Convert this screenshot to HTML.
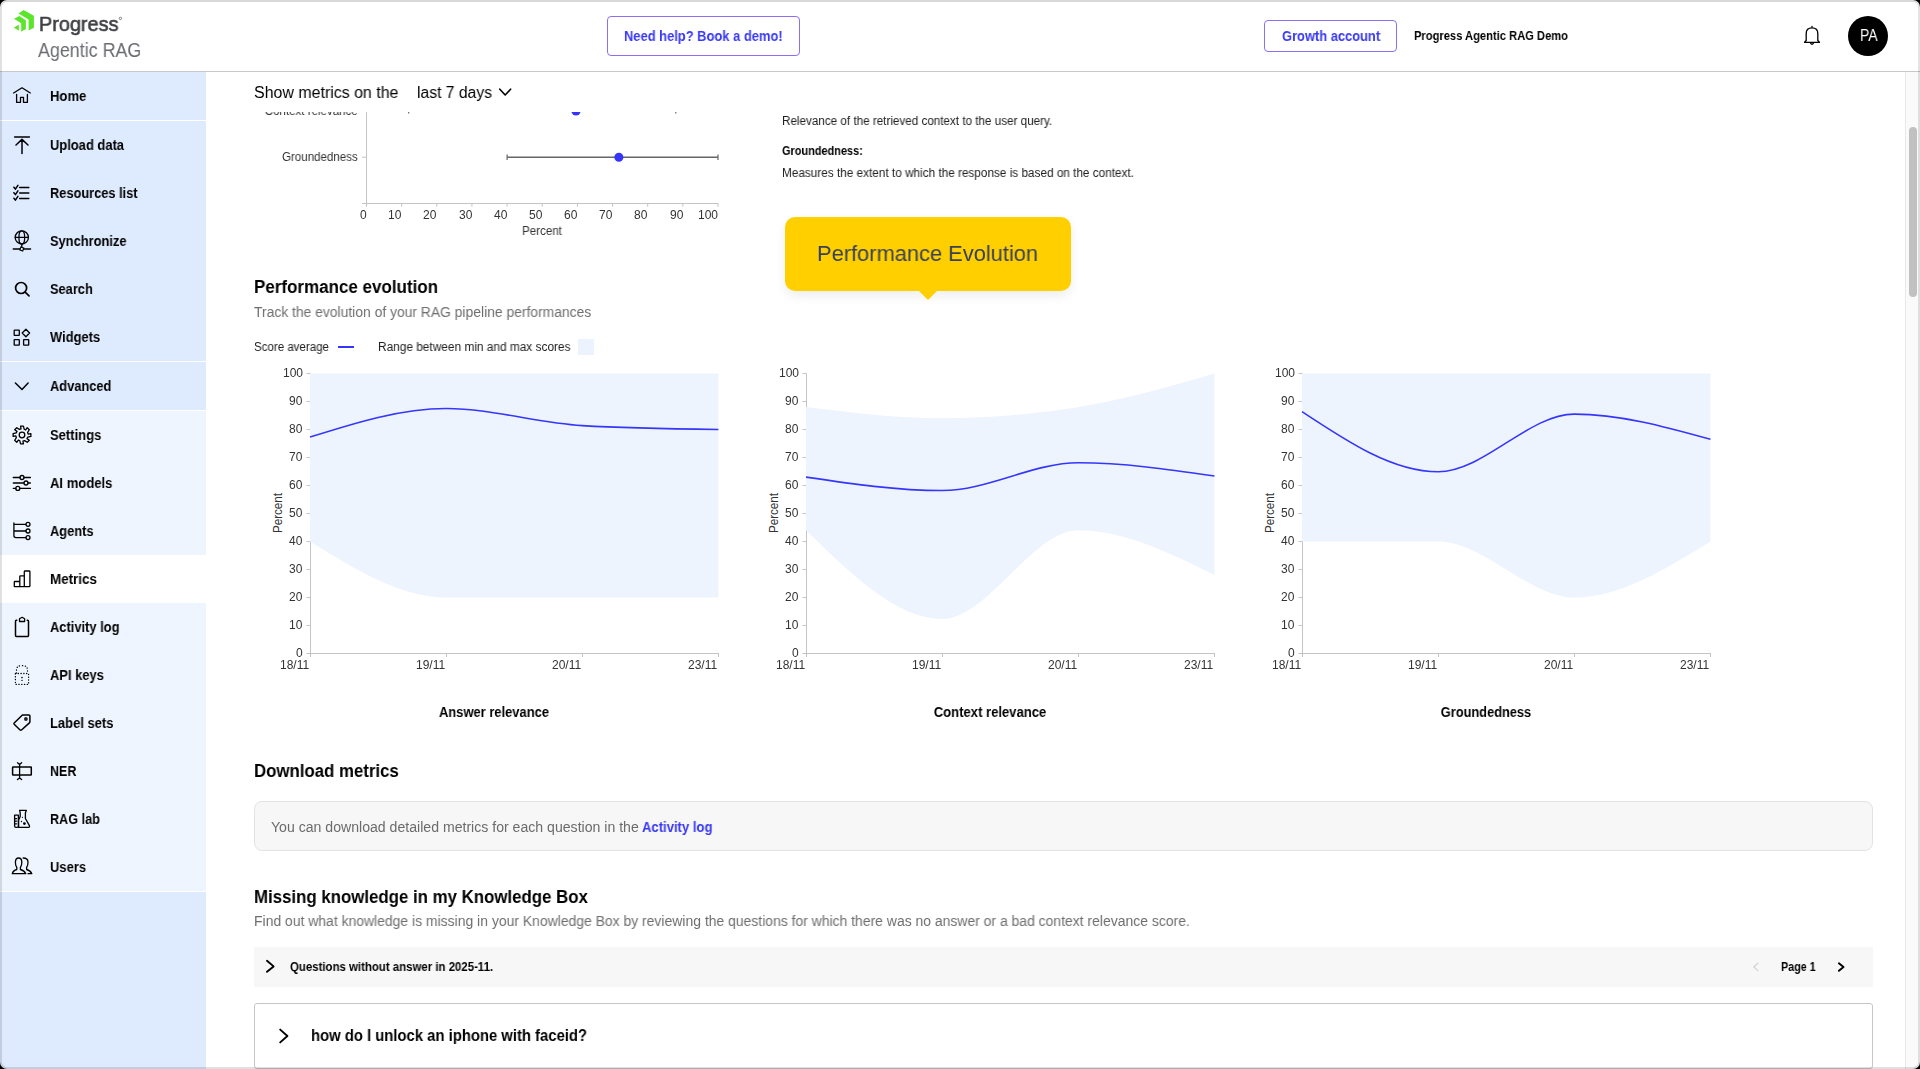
<!DOCTYPE html>
<html><head><meta charset="utf-8"><style>
*{margin:0;padding:0;box-sizing:border-box}
html,body{width:1920px;height:1069px;overflow:hidden;background:#fff;font-family:"Liberation Sans", sans-serif}
.t{position:absolute;white-space:nowrap;line-height:1;font-family:"Liberation Sans", sans-serif;will-change:transform}
.nav{position:absolute;left:0;width:206px;height:48px}
svg{position:absolute;left:0;top:0;overflow:visible}
</style></head><body>
<!-- sidebar bg -->
<div style="position:absolute;left:0;top:72px;width:206px;height:997px;background:#deeafd"></div>
<div style="position:absolute;left:0;top:120px;width:206px;height:1px;background:#fff"></div>
<div style="position:absolute;left:0;top:361px;width:206px;height:1px;background:#fff"></div>
<div style="position:absolute;left:0;top:410px;width:206px;height:1px;background:#fff"></div>
<div style="position:absolute;left:0;top:891px;width:206px;height:1px;background:#fff"></div>
<div class="nav" style="top:72px;background:#deeafd"></div><div class="nav" style="top:121px;background:#deeafd"></div><div class="nav" style="top:169px;background:#deeafd"></div><div class="nav" style="top:217px;background:#deeafd"></div><div class="nav" style="top:265px;background:#deeafd"></div><div class="nav" style="top:313px;background:#deeafd"></div><div class="nav" style="top:362px;background:#deeafd"></div><div class="nav" style="top:411px;background:#eef5fe"></div><div class="nav" style="top:459px;background:#eef5fe"></div><div class="nav" style="top:507px;background:#eef5fe"></div><div class="nav" style="top:555px;background:#ffffff"></div><div class="nav" style="top:603px;background:#eef5fe"></div><div class="nav" style="top:651px;background:#eef5fe"></div><div class="nav" style="top:699px;background:#eef5fe"></div><div class="nav" style="top:747px;background:#eef5fe"></div><div class="nav" style="top:795px;background:#eef5fe"></div><div class="nav" style="top:843px;background:#eef5fe"></div>
<!-- header -->
<div style="position:absolute;left:0;top:0;width:1920px;height:71px;background:#fff"></div>
<div style="position:absolute;left:0;top:71px;width:1920px;height:1px;background:#c8c8c8"></div>
<div style="position:absolute;left:607px;top:16px;width:193px;height:40px;border:1px solid #8d6ff6;border-radius:4px"></div>
<div style="position:absolute;left:1264px;top:20px;width:133px;height:32px;border:1px solid #8d6ff6;border-radius:4px"></div>
<div style="position:absolute;left:1848px;top:16px;width:40px;height:40px;border-radius:50%;background:#000"></div>
<!-- main boxes -->
<div style="position:absolute;left:254px;top:801px;width:1619px;height:50px;background:#f7f7f7;border:1px solid #e3e3e3;border-radius:8px"></div>
<div style="position:absolute;left:254px;top:947px;width:1619px;height:40px;background:#f7f7f7"></div>
<div style="position:absolute;left:254px;top:1003px;width:1619px;height:66px;background:#fff;border:1px solid #c6c6c6;border-radius:3px"></div>
<!-- tooltip -->
<div style="position:absolute;left:785px;top:217px;width:286px;height:74px;background:#ffcf00;border-radius:10px;box-shadow:0 5px 12px rgba(0,0,0,0.07)"></div>
<div style="position:absolute;left:917.5px;top:290px;width:0;height:0;border-left:10px solid transparent;border-right:10px solid transparent;border-top:10.7px solid #ffcf00"></div>
<!-- legend -->
<div style="position:absolute;left:338px;top:346px;width:16px;height:2px;background:#3535fb"></div>
<div style="position:absolute;left:578px;top:339px;width:16px;height:16px;background:#edf3fe"></div>
<svg width="1920" height="1069" viewBox="0 0 1920 1069">
<line x1="366.5" y1="105" x2="366.5" y2="204" stroke="#c4c4c4" stroke-width="1"/><line x1="362" y1="203.5" x2="718.5" y2="203.5" stroke="#c4c4c4" stroke-width="1"/><line x1="366.50" y1="203.5" x2="366.50" y2="206.7" stroke="#c4c4c4" stroke-width="1"/><line x1="401.65" y1="203.5" x2="401.65" y2="206.7" stroke="#c4c4c4" stroke-width="1"/><line x1="436.80" y1="203.5" x2="436.80" y2="206.7" stroke="#c4c4c4" stroke-width="1"/><line x1="471.95" y1="203.5" x2="471.95" y2="206.7" stroke="#c4c4c4" stroke-width="1"/><line x1="507.10" y1="203.5" x2="507.10" y2="206.7" stroke="#c4c4c4" stroke-width="1"/><line x1="542.25" y1="203.5" x2="542.25" y2="206.7" stroke="#c4c4c4" stroke-width="1"/><line x1="577.40" y1="203.5" x2="577.40" y2="206.7" stroke="#c4c4c4" stroke-width="1"/><line x1="612.55" y1="203.5" x2="612.55" y2="206.7" stroke="#c4c4c4" stroke-width="1"/><line x1="647.70" y1="203.5" x2="647.70" y2="206.7" stroke="#c4c4c4" stroke-width="1"/><line x1="682.85" y1="203.5" x2="682.85" y2="206.7" stroke="#c4c4c4" stroke-width="1"/><line x1="718.00" y1="203.5" x2="718.00" y2="206.7" stroke="#c4c4c4" stroke-width="1"/><line x1="362" y1="157.2" x2="366.5" y2="157.2" stroke="#c4c4c4" stroke-width="1"/><line x1="362" y1="111" x2="366.5" y2="111" stroke="#c4c4c4" stroke-width="1"/><line x1="507.10" y1="157.2" x2="718.00" y2="157.2" stroke="#666" stroke-width="1.6"/><line x1="507.10" y1="154.5" x2="507.10" y2="160" stroke="#666" stroke-width="1.2"/><line x1="718.00" y1="154.5" x2="718.00" y2="160" stroke="#666" stroke-width="1.2"/><circle cx="618.88" cy="157.2" r="4.5" fill="#3535fb"/><line x1="408.68" y1="111" x2="675.82" y2="111" stroke="#666" stroke-width="1.6"/><line x1="408.68" y1="108.5" x2="408.68" y2="113.5" stroke="#666" stroke-width="1.2"/><line x1="675.82" y1="108.5" x2="675.82" y2="113.5" stroke="#666" stroke-width="1.2"/><circle cx="575.99" cy="111" r="4.6" fill="#3535fb"/>
<line x1="310.50" y1="373.50" x2="310.50" y2="654.00" stroke="#c4c4c4" stroke-width="1"/><line x1="310.00" y1="653.50" x2="719.00" y2="653.50" stroke="#c4c4c4" stroke-width="1"/><line x1="306.50" y1="653.50" x2="310.50" y2="653.50" stroke="#c4c4c4" stroke-width="1"/><line x1="306.50" y1="625.50" x2="310.50" y2="625.50" stroke="#c4c4c4" stroke-width="1"/><line x1="306.50" y1="597.50" x2="310.50" y2="597.50" stroke="#c4c4c4" stroke-width="1"/><line x1="306.50" y1="569.50" x2="310.50" y2="569.50" stroke="#c4c4c4" stroke-width="1"/><line x1="306.50" y1="541.50" x2="310.50" y2="541.50" stroke="#c4c4c4" stroke-width="1"/><line x1="306.50" y1="513.50" x2="310.50" y2="513.50" stroke="#c4c4c4" stroke-width="1"/><line x1="306.50" y1="485.50" x2="310.50" y2="485.50" stroke="#c4c4c4" stroke-width="1"/><line x1="306.50" y1="457.50" x2="310.50" y2="457.50" stroke="#c4c4c4" stroke-width="1"/><line x1="306.50" y1="429.50" x2="310.50" y2="429.50" stroke="#c4c4c4" stroke-width="1"/><line x1="306.50" y1="401.50" x2="310.50" y2="401.50" stroke="#c4c4c4" stroke-width="1"/><line x1="306.50" y1="373.50" x2="310.50" y2="373.50" stroke="#c4c4c4" stroke-width="1"/><line x1="310.50" y1="653.50" x2="310.50" y2="657.00" stroke="#c4c4c4" stroke-width="1"/><line x1="446.50" y1="653.50" x2="446.50" y2="657.00" stroke="#c4c4c4" stroke-width="1"/><line x1="582.50" y1="653.50" x2="582.50" y2="657.00" stroke="#c4c4c4" stroke-width="1"/><line x1="718.50" y1="653.50" x2="718.50" y2="657.00" stroke="#c4c4c4" stroke-width="1"/><path d="M310.00,373.50C355.38,373.50,400.77,373.50,446.15,373.50C491.53,373.50,536.92,373.50,582.30,373.50C627.68,373.50,673.07,373.50,718.45,373.50L718.45,597.50C673.07,597.50,627.68,597.50,582.30,597.50C536.92,597.50,491.53,597.50,446.15,597.50C400.77,597.50,355.38,569.50,310.00,541.50Z" fill="#eef4fe"/><path d="M310.00,437.06C355.38,422.78,400.77,408.50,446.15,408.50C491.53,408.50,536.92,422.97,582.30,425.58C627.68,428.19,673.07,428.85,718.45,429.50" fill="none" stroke="#3535fb" stroke-width="1.6"/><text x="278.20" y="517.00" transform="rotate(-90 278.20 513.00)" text-anchor="middle" font-size="12" fill="#333" font-family="Liberation Sans, sans-serif" textLength="40" lengthAdjust="spacingAndGlyphs">Percent</text><line x1="806.50" y1="373.50" x2="806.50" y2="654.00" stroke="#c4c4c4" stroke-width="1"/><line x1="806.00" y1="653.50" x2="1215.00" y2="653.50" stroke="#c4c4c4" stroke-width="1"/><line x1="802.50" y1="653.50" x2="806.50" y2="653.50" stroke="#c4c4c4" stroke-width="1"/><line x1="802.50" y1="625.50" x2="806.50" y2="625.50" stroke="#c4c4c4" stroke-width="1"/><line x1="802.50" y1="597.50" x2="806.50" y2="597.50" stroke="#c4c4c4" stroke-width="1"/><line x1="802.50" y1="569.50" x2="806.50" y2="569.50" stroke="#c4c4c4" stroke-width="1"/><line x1="802.50" y1="541.50" x2="806.50" y2="541.50" stroke="#c4c4c4" stroke-width="1"/><line x1="802.50" y1="513.50" x2="806.50" y2="513.50" stroke="#c4c4c4" stroke-width="1"/><line x1="802.50" y1="485.50" x2="806.50" y2="485.50" stroke="#c4c4c4" stroke-width="1"/><line x1="802.50" y1="457.50" x2="806.50" y2="457.50" stroke="#c4c4c4" stroke-width="1"/><line x1="802.50" y1="429.50" x2="806.50" y2="429.50" stroke="#c4c4c4" stroke-width="1"/><line x1="802.50" y1="401.50" x2="806.50" y2="401.50" stroke="#c4c4c4" stroke-width="1"/><line x1="802.50" y1="373.50" x2="806.50" y2="373.50" stroke="#c4c4c4" stroke-width="1"/><line x1="806.50" y1="653.50" x2="806.50" y2="657.00" stroke="#c4c4c4" stroke-width="1"/><line x1="942.50" y1="653.50" x2="942.50" y2="657.00" stroke="#c4c4c4" stroke-width="1"/><line x1="1078.50" y1="653.50" x2="1078.50" y2="657.00" stroke="#c4c4c4" stroke-width="1"/><line x1="1214.50" y1="653.50" x2="1214.50" y2="657.00" stroke="#c4c4c4" stroke-width="1"/><path d="M806.00,407.10C851.38,412.70,896.77,418.30,942.15,418.30C987.53,418.30,1032.92,414.57,1078.30,407.10C1123.68,399.63,1169.07,386.57,1214.45,373.50L1214.45,575.10C1169.07,552.70,1123.68,530.30,1078.30,530.30C1032.92,530.30,987.53,619.06,942.15,619.06C896.77,619.06,851.38,574.68,806.00,530.30Z" fill="#eef4fe"/><path d="M806.00,477.10C851.38,483.82,896.77,490.54,942.15,490.54C987.53,490.54,1032.92,462.82,1078.30,462.82C1123.68,462.82,1169.07,469.40,1214.45,475.98" fill="none" stroke="#3535fb" stroke-width="1.6"/><text x="774.20" y="517.00" transform="rotate(-90 774.20 513.00)" text-anchor="middle" font-size="12" fill="#333" font-family="Liberation Sans, sans-serif" textLength="40" lengthAdjust="spacingAndGlyphs">Percent</text><line x1="1302.50" y1="373.50" x2="1302.50" y2="654.00" stroke="#c4c4c4" stroke-width="1"/><line x1="1302.00" y1="653.50" x2="1711.00" y2="653.50" stroke="#c4c4c4" stroke-width="1"/><line x1="1298.50" y1="653.50" x2="1302.50" y2="653.50" stroke="#c4c4c4" stroke-width="1"/><line x1="1298.50" y1="625.50" x2="1302.50" y2="625.50" stroke="#c4c4c4" stroke-width="1"/><line x1="1298.50" y1="597.50" x2="1302.50" y2="597.50" stroke="#c4c4c4" stroke-width="1"/><line x1="1298.50" y1="569.50" x2="1302.50" y2="569.50" stroke="#c4c4c4" stroke-width="1"/><line x1="1298.50" y1="541.50" x2="1302.50" y2="541.50" stroke="#c4c4c4" stroke-width="1"/><line x1="1298.50" y1="513.50" x2="1302.50" y2="513.50" stroke="#c4c4c4" stroke-width="1"/><line x1="1298.50" y1="485.50" x2="1302.50" y2="485.50" stroke="#c4c4c4" stroke-width="1"/><line x1="1298.50" y1="457.50" x2="1302.50" y2="457.50" stroke="#c4c4c4" stroke-width="1"/><line x1="1298.50" y1="429.50" x2="1302.50" y2="429.50" stroke="#c4c4c4" stroke-width="1"/><line x1="1298.50" y1="401.50" x2="1302.50" y2="401.50" stroke="#c4c4c4" stroke-width="1"/><line x1="1298.50" y1="373.50" x2="1302.50" y2="373.50" stroke="#c4c4c4" stroke-width="1"/><line x1="1302.50" y1="653.50" x2="1302.50" y2="657.00" stroke="#c4c4c4" stroke-width="1"/><line x1="1438.50" y1="653.50" x2="1438.50" y2="657.00" stroke="#c4c4c4" stroke-width="1"/><line x1="1574.50" y1="653.50" x2="1574.50" y2="657.00" stroke="#c4c4c4" stroke-width="1"/><line x1="1710.50" y1="653.50" x2="1710.50" y2="657.00" stroke="#c4c4c4" stroke-width="1"/><path d="M1302.00,373.50C1347.38,373.50,1392.77,373.50,1438.15,373.50C1483.53,373.50,1528.92,373.50,1574.30,373.50C1619.68,373.50,1665.07,373.50,1710.45,373.50L1710.45,541.50C1665.07,569.50,1619.68,597.50,1574.30,597.50C1528.92,597.50,1483.53,541.50,1438.15,541.50C1392.77,541.50,1347.38,541.50,1302.00,541.50Z" fill="#eef4fe"/><path d="M1302.00,411.58C1347.38,441.68,1392.77,471.78,1438.15,471.78C1483.53,471.78,1528.92,414.10,1574.30,414.10C1619.68,414.10,1665.07,426.70,1710.45,439.30" fill="none" stroke="#3535fb" stroke-width="1.6"/><text x="1270.20" y="517.00" transform="rotate(-90 1270.20 513.00)" text-anchor="middle" font-size="12" fill="#333" font-family="Liberation Sans, sans-serif" textLength="40" lengthAdjust="spacingAndGlyphs">Percent</text>
</svg>
<!-- sticky header cover -->
<div style="position:absolute;left:206px;top:72px;width:1699px;height:40px;background:#fff;z-index:2"></div>
<!-- scrollbar -->
<div style="position:absolute;left:1905px;top:72px;width:15px;height:997px;background:#fafafa;border-left:1px solid #e8e8e8"></div>
<div style="position:absolute;left:1909px;top:127px;width:8px;height:170px;background:#c1c1c1;border-radius:4px"></div>
<div class="t" id="logo1" style="top:13.12px;font-size:21px;font-weight:400;color:#3e3f44;left:39.20px;transform:scaleX(0.9461);transform-origin:0 0;-webkit-text-stroke:0.6px #3e3f44;">Progress</div><div class="t" id="logo2" style="top:39.02px;font-size:21px;font-weight:400;color:#6b6c70;left:38.00px;transform:scaleX(0.8510);transform-origin:0 0;">Agentic RAG</div><div class="t" id="demo" style="top:29.35px;font-size:14px;font-weight:700;color:#3838f5;left:623.70px;transform:scaleX(0.9226);transform-origin:0 0;">Need help? Book a demo!</div><div class="t" id="growth" style="top:29.05px;font-size:14px;font-weight:700;color:#3838f5;left:1281.90px;transform:scaleX(0.9206);transform-origin:0 0;">Growth account</div><div class="t" id="kbname" style="top:28.54px;font-size:13.3px;font-weight:700;color:#000;left:1413.50px;transform:scaleX(0.8392);transform-origin:0 0;">Progress Agentic RAG Demo</div><div class="t" id="pa" style="top:26.61px;font-size:17px;font-weight:400;color:#fff;left:1859.60px;transform:scaleX(0.8263);transform-origin:0 0;">PA</div><div class="t" id="nav0" style="top:89.15px;font-size:14px;font-weight:700;color:#000;left:49.60px;transform:scaleX(0.9356);transform-origin:0 0;">Home</div><div class="t" id="nav1" style="top:138.15px;font-size:14px;font-weight:700;color:#000;left:49.60px;transform:scaleX(0.9236);transform-origin:0 0;">Upload data</div><div class="t" id="nav2" style="top:186.15px;font-size:14px;font-weight:700;color:#000;left:49.60px;transform:scaleX(0.9152);transform-origin:0 0;">Resources list</div><div class="t" id="nav3" style="top:234.15px;font-size:14px;font-weight:700;color:#000;left:49.60px;transform:scaleX(0.9189);transform-origin:0 0;">Synchronize</div><div class="t" id="nav4" style="top:282.15px;font-size:14px;font-weight:700;color:#000;left:49.60px;transform:scaleX(0.9164);transform-origin:0 0;">Search</div><div class="t" id="nav5" style="top:330.15px;font-size:14px;font-weight:700;color:#000;left:49.60px;transform:scaleX(0.9240);transform-origin:0 0;">Widgets</div><div class="t" id="nav6" style="top:379.15px;font-size:14px;font-weight:700;color:#000;left:49.60px;transform:scaleX(0.9174);transform-origin:0 0;">Advanced</div><div class="t" id="nav7" style="top:428.15px;font-size:14px;font-weight:700;color:#000;left:49.60px;transform:scaleX(0.9287);transform-origin:0 0;">Settings</div><div class="t" id="nav8" style="top:476.15px;font-size:14px;font-weight:700;color:#000;left:49.60px;transform:scaleX(0.9326);transform-origin:0 0;">AI models</div><div class="t" id="nav9" style="top:524.15px;font-size:14px;font-weight:700;color:#000;left:49.60px;transform:scaleX(0.9167);transform-origin:0 0;">Agents</div><div class="t" id="nav10" style="top:572.15px;font-size:14px;font-weight:700;color:#000;left:49.60px;transform:scaleX(0.9566);transform-origin:0 0;">Metrics</div><div class="t" id="nav11" style="top:620.15px;font-size:14px;font-weight:700;color:#000;left:49.60px;transform:scaleX(0.9210);transform-origin:0 0;">Activity log</div><div class="t" id="nav12" style="top:668.15px;font-size:14px;font-weight:700;color:#000;left:49.60px;transform:scaleX(0.9233);transform-origin:0 0;">API keys</div><div class="t" id="nav13" style="top:716.15px;font-size:14px;font-weight:700;color:#000;left:49.60px;transform:scaleX(0.9258);transform-origin:0 0;">Label sets</div><div class="t" id="nav14" style="top:764.15px;font-size:14px;font-weight:700;color:#000;left:49.60px;transform:scaleX(0.8930);transform-origin:0 0;">NER</div><div class="t" id="nav15" style="top:812.15px;font-size:14px;font-weight:700;color:#000;left:49.60px;transform:scaleX(0.9017);transform-origin:0 0;">RAG lab</div><div class="t" id="nav16" style="top:860.15px;font-size:14px;font-weight:700;color:#000;left:49.60px;transform:scaleX(0.9249);transform-origin:0 0;">Users</div><div class="t" id="show" style="top:84.96px;font-size:16px;font-weight:400;color:#000;left:254.40px;transform:scaleX(0.9962);transform-origin:0 0;z-index:3;">Show metrics on the</div><div class="t" id="last7" style="top:84.96px;font-size:16px;font-weight:400;color:#000;left:417.00px;transform:scaleX(0.9806);transform-origin:0 0;z-index:3;">last 7 days</div><div class="t" id="dc_g" style="top:150.84px;font-size:12px;font-weight:400;color:#333;right:1561.80px;transform:scaleX(0.9615);transform-origin:100% 0;">Groundedness</div><div class="t" id="dc_c" style="top:104.84px;font-size:12px;font-weight:400;color:#333;right:1561.80px;transform:scaleX(0.9614);transform-origin:100% 0;">Context relevance</div><div class="t" id="dcx0" style="top:209.34px;font-size:12px;font-weight:400;color:#333;right:1553.50px;">0</div><div class="t" id="dcx1" style="top:209.34px;font-size:12px;font-weight:400;color:#333;right:1518.35px;">10</div><div class="t" id="dcx2" style="top:209.34px;font-size:12px;font-weight:400;color:#333;right:1483.20px;">20</div><div class="t" id="dcx3" style="top:209.34px;font-size:12px;font-weight:400;color:#333;right:1448.05px;">30</div><div class="t" id="dcx4" style="top:209.34px;font-size:12px;font-weight:400;color:#333;right:1412.90px;">40</div><div class="t" id="dcx5" style="top:209.34px;font-size:12px;font-weight:400;color:#333;right:1377.75px;">50</div><div class="t" id="dcx6" style="top:209.34px;font-size:12px;font-weight:400;color:#333;right:1342.60px;">60</div><div class="t" id="dcx7" style="top:209.34px;font-size:12px;font-weight:400;color:#333;right:1307.45px;">70</div><div class="t" id="dcx8" style="top:209.34px;font-size:12px;font-weight:400;color:#333;right:1272.30px;">80</div><div class="t" id="dcx9" style="top:209.34px;font-size:12px;font-weight:400;color:#333;right:1237.15px;">90</div><div class="t" id="dcx10" style="top:209.34px;font-size:12px;font-weight:400;color:#333;right:1202.00px;">100</div><div class="t" style="top:225.04px;font-size:12px;font-weight:400;color:#333;left:-458.10px;width:2000px;text-align:center;transform:scaleX(0.9623);transform-origin:50% 0;"><span id="dc_pct">Percent</span></div><div class="t" id="r1" style="top:115.24px;font-size:12px;font-weight:400;color:#222;left:782.20px;transform:scaleX(0.9722);transform-origin:0 0;">Relevance of the retrieved context to the user query.</div><div class="t" id="r2" style="top:145.24px;font-size:12px;font-weight:700;color:#000;left:782.20px;transform:scaleX(0.9110);transform-origin:0 0;">Groundedness:</div><div class="t" id="r3" style="top:166.94px;font-size:12px;font-weight:400;color:#222;left:782.20px;transform:scaleX(0.9808);transform-origin:0 0;">Measures the extent to which the response is based on the context.</div><div class="t" id="tip" style="top:242.68px;font-size:22px;font-weight:400;color:#384157;left:816.80px;transform:scaleX(0.9934);transform-origin:0 0;">Performance Evolution</div><div class="t" id="pe_h" style="top:277.66px;font-size:18px;font-weight:700;color:#000;left:254.30px;transform:scaleX(0.9439);transform-origin:0 0;">Performance evolution</div><div class="t" id="pe_s" style="top:304.55px;font-size:14px;font-weight:400;color:#6e6e6e;left:254.30px;transform:scaleX(0.9911);transform-origin:0 0;">Track the evolution of your RAG pipeline performances</div><div class="t" id="lg1" style="top:341.34px;font-size:12px;font-weight:400;color:#222;left:254.00px;transform:scaleX(0.9610);transform-origin:0 0;">Score average</div><div class="t" id="lg2" style="top:341.34px;font-size:12px;font-weight:400;color:#222;left:377.50px;transform:scaleX(0.9882);transform-origin:0 0;">Range between min and max scores</div><div class="t" id="c0y0" style="top:647.14px;font-size:12px;font-weight:400;color:#333;right:1617.30px;">0</div><div class="t" id="c0y1" style="top:619.14px;font-size:12px;font-weight:400;color:#333;right:1617.30px;">10</div><div class="t" id="c0y2" style="top:591.14px;font-size:12px;font-weight:400;color:#333;right:1617.30px;">20</div><div class="t" id="c0y3" style="top:563.14px;font-size:12px;font-weight:400;color:#333;right:1617.30px;">30</div><div class="t" id="c0y4" style="top:535.14px;font-size:12px;font-weight:400;color:#333;right:1617.30px;">40</div><div class="t" id="c0y5" style="top:507.14px;font-size:12px;font-weight:400;color:#333;right:1617.30px;">50</div><div class="t" id="c0y6" style="top:479.14px;font-size:12px;font-weight:400;color:#333;right:1617.30px;">60</div><div class="t" id="c0y7" style="top:451.14px;font-size:12px;font-weight:400;color:#333;right:1617.30px;">70</div><div class="t" id="c0y8" style="top:423.14px;font-size:12px;font-weight:400;color:#333;right:1617.30px;">80</div><div class="t" id="c0y9" style="top:395.14px;font-size:12px;font-weight:400;color:#333;right:1617.30px;">90</div><div class="t" id="c0y10" style="top:367.14px;font-size:12px;font-weight:400;color:#333;right:1617.30px;">100</div><div class="t" id="c0x0" style="top:658.84px;font-size:12px;font-weight:400;color:#333;right:1611.30px;">18/11</div><div class="t" id="c0x1" style="top:658.84px;font-size:12px;font-weight:400;color:#333;right:1475.30px;">19/11</div><div class="t" id="c0x2" style="top:658.84px;font-size:12px;font-weight:400;color:#333;right:1339.30px;">20/11</div><div class="t" id="c0x3" style="top:658.84px;font-size:12px;font-weight:400;color:#333;right:1203.30px;">23/11</div><div class="t" style="top:704.65px;font-size:14px;font-weight:700;color:#000;left:-506.10px;width:2000px;text-align:center;transform:scaleX(0.9238);transform-origin:50% 0;"><span id="c0t">Answer relevance</span></div><div class="t" id="c1y0" style="top:647.14px;font-size:12px;font-weight:400;color:#333;right:1121.30px;">0</div><div class="t" id="c1y1" style="top:619.14px;font-size:12px;font-weight:400;color:#333;right:1121.30px;">10</div><div class="t" id="c1y2" style="top:591.14px;font-size:12px;font-weight:400;color:#333;right:1121.30px;">20</div><div class="t" id="c1y3" style="top:563.14px;font-size:12px;font-weight:400;color:#333;right:1121.30px;">30</div><div class="t" id="c1y4" style="top:535.14px;font-size:12px;font-weight:400;color:#333;right:1121.30px;">40</div><div class="t" id="c1y5" style="top:507.14px;font-size:12px;font-weight:400;color:#333;right:1121.30px;">50</div><div class="t" id="c1y6" style="top:479.14px;font-size:12px;font-weight:400;color:#333;right:1121.30px;">60</div><div class="t" id="c1y7" style="top:451.14px;font-size:12px;font-weight:400;color:#333;right:1121.30px;">70</div><div class="t" id="c1y8" style="top:423.14px;font-size:12px;font-weight:400;color:#333;right:1121.30px;">80</div><div class="t" id="c1y9" style="top:395.14px;font-size:12px;font-weight:400;color:#333;right:1121.30px;">90</div><div class="t" id="c1y10" style="top:367.14px;font-size:12px;font-weight:400;color:#333;right:1121.30px;">100</div><div class="t" id="c1x0" style="top:658.84px;font-size:12px;font-weight:400;color:#333;right:1115.30px;">18/11</div><div class="t" id="c1x1" style="top:658.84px;font-size:12px;font-weight:400;color:#333;right:979.30px;">19/11</div><div class="t" id="c1x2" style="top:658.84px;font-size:12px;font-weight:400;color:#333;right:843.30px;">20/11</div><div class="t" id="c1x3" style="top:658.84px;font-size:12px;font-weight:400;color:#333;right:707.30px;">23/11</div><div class="t" style="top:704.65px;font-size:14px;font-weight:700;color:#000;left:-10.10px;width:2000px;text-align:center;transform:scaleX(0.9328);transform-origin:50% 0;"><span id="c1t">Context relevance</span></div><div class="t" id="c2y0" style="top:647.14px;font-size:12px;font-weight:400;color:#333;right:625.30px;">0</div><div class="t" id="c2y1" style="top:619.14px;font-size:12px;font-weight:400;color:#333;right:625.30px;">10</div><div class="t" id="c2y2" style="top:591.14px;font-size:12px;font-weight:400;color:#333;right:625.30px;">20</div><div class="t" id="c2y3" style="top:563.14px;font-size:12px;font-weight:400;color:#333;right:625.30px;">30</div><div class="t" id="c2y4" style="top:535.14px;font-size:12px;font-weight:400;color:#333;right:625.30px;">40</div><div class="t" id="c2y5" style="top:507.14px;font-size:12px;font-weight:400;color:#333;right:625.30px;">50</div><div class="t" id="c2y6" style="top:479.14px;font-size:12px;font-weight:400;color:#333;right:625.30px;">60</div><div class="t" id="c2y7" style="top:451.14px;font-size:12px;font-weight:400;color:#333;right:625.30px;">70</div><div class="t" id="c2y8" style="top:423.14px;font-size:12px;font-weight:400;color:#333;right:625.30px;">80</div><div class="t" id="c2y9" style="top:395.14px;font-size:12px;font-weight:400;color:#333;right:625.30px;">90</div><div class="t" id="c2y10" style="top:367.14px;font-size:12px;font-weight:400;color:#333;right:625.30px;">100</div><div class="t" id="c2x0" style="top:658.84px;font-size:12px;font-weight:400;color:#333;right:619.30px;">18/11</div><div class="t" id="c2x1" style="top:658.84px;font-size:12px;font-weight:400;color:#333;right:483.30px;">19/11</div><div class="t" id="c2x2" style="top:658.84px;font-size:12px;font-weight:400;color:#333;right:347.30px;">20/11</div><div class="t" id="c2x3" style="top:658.84px;font-size:12px;font-weight:400;color:#333;right:211.30px;">23/11</div><div class="t" style="top:704.65px;font-size:14px;font-weight:700;color:#000;left:485.90px;width:2000px;text-align:center;transform:scaleX(0.9140);transform-origin:50% 0;"><span id="c2t">Groundedness</span></div><div class="t" id="dl_h" style="top:762.26px;font-size:18px;font-weight:700;color:#000;left:254.40px;transform:scaleX(0.9340);transform-origin:0 0;">Download metrics</div><div class="t" id="dl_t" style="top:819.95px;font-size:14px;font-weight:400;color:#6b6b6b;left:271.00px;transform:scaleX(1.0069);transform-origin:0 0;">You can download detailed metrics for each question in the</div><div class="t" id="dl_l" style="top:819.95px;font-size:14px;font-weight:700;color:#3838f5;left:642.20px;transform:scaleX(0.9342);transform-origin:0 0;">Activity log</div><div class="t" id="mk_h" style="top:888.06px;font-size:18px;font-weight:700;color:#000;left:254.00px;transform:scaleX(0.9352);transform-origin:0 0;">Missing knowledge in my Knowledge Box</div><div class="t" id="mk_s" style="top:914.25px;font-size:14px;font-weight:400;color:#6e6e6e;left:254.00px;transform:scaleX(0.9954);transform-origin:0 0;">Find out what knowledge is missing in your Knowledge Box by reviewing the questions for which there was no answer or a bad context relevance score.</div><div class="t" id="q_t" style="top:960.64px;font-size:12px;font-weight:700;color:#000;left:290.20px;transform:scaleX(0.9517);transform-origin:0 0;">Questions without answer in 2025-11.</div><div class="t" id="pg" style="top:960.74px;font-size:12px;font-weight:700;color:#000;left:1780.60px;transform:scaleX(0.8966);transform-origin:0 0;">Page 1</div><div class="t" id="qq" style="top:1027.96px;font-size:16px;font-weight:700;color:#000;left:311.20px;transform:scaleX(0.9269);transform-origin:0 0;">how do I unlock an iphone with faceid?</div>
<svg width="1920" height="1069" viewBox="0 0 1920 1069" style="z-index:3"><path fill="none" stroke="#000" stroke-width="1.3" stroke-linecap="round" stroke-linejoin="round" d="M13.6,93 L22,87.8 L30.3,93 M16.6,94.4 V102.3 H20.5 V97.3 H23.5 V102.3 H27.4 V94.4"/>
<path fill="none" stroke="#000" stroke-width="1.5" stroke-linecap="round" stroke-linejoin="round" d="M14.6,137 H29.4 M22,139.6 V153.6 M16,145 L22,139.4 L28,145"/>
<path fill="none" stroke="#000" stroke-width="1.5" stroke-linecap="round" stroke-linejoin="round" d="M13.9,187.2 L15.4,189.1 L17.9,185.3 M19.6,187.5 H28.8 M13.9,192.7 L15.4,194.6 L17.9,190.8 M19.6,193.0 H28.8 M13.9,198.2 L15.4,200.1 L17.9,196.3 M19.6,198.5 H28.8 "/>
<circle cx="21.8" cy="237.4" r="6.6" fill="none" stroke="#000" stroke-width="1.3" stroke-linecap="round" stroke-linejoin="round"/>
<ellipse cx="21.8" cy="237.4" rx="2.9" ry="6.6" fill="none" stroke="#000" stroke-width="1.3" stroke-linecap="round" stroke-linejoin="round"/>
<path fill="none" stroke="#000" stroke-width="1.3" stroke-linecap="round" stroke-linejoin="round" d="M15.2,237.4 H28.4 M21.8,244 V247 M13.2,249 H19.8 M23.8,249 H30.6"/>
<rect x="20.3" y="247.5" width="3" height="3" transform="rotate(20 21.8 249)" fill="#fff" stroke="#000" stroke-width="1.2"/>
<circle cx="21.1" cy="288" r="5.5" fill="none" stroke="#000" stroke-width="1.7"/>
<path fill="none" stroke="#000" stroke-width="1.7" stroke-linecap="round" d="M25.2,292.2 L29,295.9"/>
<rect x="14.2" y="330.2" width="5.1" height="5.2" rx="0.4" fill="none" stroke="#000" stroke-width="1.3" stroke-linecap="round" stroke-linejoin="round"/>
<rect x="14.2" y="339.6" width="5.1" height="5.5" rx="0.4" fill="none" stroke="#000" stroke-width="1.3" stroke-linecap="round" stroke-linejoin="round"/>
<rect x="23.6" y="339.6" width="5.1" height="5.5" rx="0.4" fill="none" stroke="#000" stroke-width="1.3" stroke-linecap="round" stroke-linejoin="round"/>
<path fill="none" stroke="#000" stroke-width="1.3" stroke-linecap="round" stroke-linejoin="round" d="M25.9,329.3 L29.6,333 L25.9,336.7 L22.2,333 Z"/>
<path fill="none" stroke="#000" stroke-width="1.5" stroke-linecap="round" stroke-linejoin="round" d="M15.4,383 L22,389.5 L28.1,383"/>
<path fill="none" stroke="#000" stroke-width="1.3" stroke-linecap="round" stroke-linejoin="round" d="M20.57,426.11 L23.43,426.11 L24.18,429.20 L25.65,429.99 L27.27,427.70 L29.30,429.73 L27.65,432.44 L28.13,434.04 L30.89,433.57 L30.89,436.43 L27.80,437.18 L27.01,438.65 L29.30,440.27 L27.27,442.30 L24.56,440.65 L22.96,441.13 L23.43,443.89 L20.57,443.89 L19.82,440.80 L18.35,440.01 L16.73,442.30 L14.70,440.27 L16.35,437.56 L15.87,435.96 L13.11,436.43 L13.11,433.57 L16.20,432.82 L16.99,431.35 L14.70,429.73 L16.73,427.70 L19.44,429.35 L21.04,428.87Z"/>
<circle cx="22" cy="435" r="2.8" fill="none" stroke="#000" stroke-width="1.3" stroke-linecap="round" stroke-linejoin="round"/>
<path fill="none" stroke="#000" stroke-width="1.3" stroke-linecap="round" stroke-linejoin="round" d="M13.3,477.5 H20 M24,477.5 H30.4 M13.3,483 H24 M28,483 H30.4 M13.3,488.4 H15.8 M19.8,488.4 H30.4"/>
<circle cx="22" cy="477.5" r="2" fill="none" stroke="#000" stroke-width="1.3" stroke-linecap="round" stroke-linejoin="round"/>
<circle cx="26" cy="483" r="2" fill="none" stroke="#000" stroke-width="1.3" stroke-linecap="round" stroke-linejoin="round"/>
<circle cx="17.8" cy="488.4" r="2" fill="none" stroke="#000" stroke-width="1.3" stroke-linecap="round" stroke-linejoin="round"/>
<path fill="none" stroke="#000" stroke-width="1.3" stroke-linecap="round" stroke-linejoin="round" d="M13.9,522.9 V535.6 Q13.9,537.6 15.9,537.6 H25.9 M13.9,524.3 H25.9 M13.9,531 H25.9"/>
<circle cx="28" cy="524.3" r="2" fill="none" stroke="#000" stroke-width="1.3" stroke-linecap="round" stroke-linejoin="round"/>
<circle cx="28" cy="531" r="2" fill="none" stroke="#000" stroke-width="1.3" stroke-linecap="round" stroke-linejoin="round"/>
<circle cx="28" cy="537.6" r="2" fill="none" stroke="#000" stroke-width="1.3" stroke-linecap="round" stroke-linejoin="round"/>
<path fill="none" stroke="#000" stroke-width="1.3" stroke-linecap="round" stroke-linejoin="round" d="M14.3,586.6 V582.2 Q14.3,581.5 15,581.5 H19.8 V586.6 Z M19.8,586.6 V576.6 Q19.8,575.9 20.5,575.9 H24.3 V586.6 Z M24.3,586.6 V571.7 Q24.3,571 25,571 H29.2 Q29.9,571 29.9,571.7 V585.9 Q29.9,586.6 29.2,586.6 H15 Q14.3,586.6 14.3,585.9"/>
<path fill="none" stroke="#000" stroke-width="1.5" stroke-linecap="round" stroke-linejoin="round" d="M16.8,620.3 H16.4 Q15.5,620.3 15.5,621.2 V635.6 Q15.5,636.4 16.3,636.4 H27.7 Q28.5,636.4 28.5,635.6 V621.2 Q28.5,620.3 27.6,620.3 H27.2"/>
<path fill="none" stroke="#000" stroke-width="1.3" stroke-linecap="round" stroke-linejoin="round" d="M19.5,621.5 V618.8 L22.2,617.3 L24.6,618.8 V621.5 Z"/>
<path fill="none" stroke="#000" stroke-width="1.3" stroke-linecap="round" stroke-dasharray="0.2 2.6" d="M15.4,673.5 H28.6 V684.4 H15.4 Z M16.5,673 V670 Q16.5,665.6 22,665.6 Q27.5,665.6 27.5,670 V673"/>
<circle cx="22" cy="677.6" r="0.8" fill="#000"/><circle cx="22" cy="680.4" r="0.7" fill="#000"/>
<path fill="none" stroke="#000" stroke-width="1.5" stroke-linecap="round" stroke-linejoin="round" d="M22.4,715 H29 Q29.9,715 29.9,716 V721.8 Q29.9,722.4 29.4,722.9 L21.5,730 Q20.8,730.5 20.1,730 L14.2,724.3 Q13.6,723.6 14.2,723 Z"/>
<circle cx="25.9" cy="719" r="1.9" fill="#222"/>
<rect x="12.6" y="766.9" width="18.7" height="8" rx="0.5" fill="none" stroke="#000" stroke-width="1.5"/>
<path fill="none" stroke="#000" stroke-width="1.3" stroke-linecap="round" stroke-linejoin="round" d="M19.6,764 V778.4 M17.5,762.8 L19.6,764.6 L21.6,762.8 M17.5,779.6 L19.6,778 L21.6,779.6"/>
<path fill="none" stroke="#000" stroke-width="1.3" stroke-linecap="round" stroke-linejoin="round" d="M14.6,815.2 H18.4 V826 Q18.4,827.3 17,827.3 H16 Q14.6,827.3 14.6,826 Z M14.8,818.6 H16.6 M14.8,821.2 H16.6 M14.8,823.8 H16.6"/>
<path fill="none" stroke="#000" stroke-width="1.3" stroke-linecap="round" stroke-linejoin="round" d="M19.6,810.3 H26.4 L25.4,812.8 V818.5 L29.4,825.6 Q30,827.3 28.4,827.3 H18.6 V820 L20.2,816.5 V812.8 Z"/>
<circle cx="24.4" cy="823.6" r="1.4" fill="#000"/><circle cx="21.5" cy="821.5" r="0.7" fill="#000"/><circle cx="22.4" cy="817.3" r="0.6" fill="#000"/>
<path fill="none" stroke="#000" stroke-width="1.3" stroke-linecap="round" stroke-linejoin="round" d="M12.3,873.7 Q13,870.5 16.8,869.5 V867.5 Q15.3,865.5 15.4,862 Q15.6,858 18.6,858 Q21.7,858 21.8,862 Q21.9,865.5 20.4,867.5 V869.5 Q24.5,870.5 25.8,873.7 Z"/>
<path fill="none" stroke="#000" stroke-width="1.3" stroke-linecap="round" stroke-linejoin="round" d="M23.2,858 Q27.9,858 28,862 Q28.1,865.5 26.6,867.5 V869.5 Q30.5,870.5 31.8,873.7 H28"/>
<path fill="none" stroke="#000" stroke-width="1.3" stroke-linecap="round" stroke-linejoin="round" d="M1804.5,42.3 H1819.5 L1817.8,40.5 V33.5 Q1817.8,27.8 1812,27.8 Q1806.2,27.8 1806.2,33.5 V40.5 Z M1812,27.8 V26.5 M1810.5,43 Q1812,45.5 1813.5,43"/>
<path fill="none" stroke="#000" stroke-width="1.6" stroke-linecap="round" stroke-linejoin="round" d="M499.8,89.2 L505.2,95 L510.6,89.2"/>
<path fill="none" stroke="#000" stroke-width="1.9" stroke-linecap="round" stroke-linejoin="round" d="M267,960.8 L273.6,966.4 L267,971.8"/>
<path fill="none" stroke="#cfcfcf" stroke-width="1.1" stroke-linecap="round" stroke-linejoin="round" d="M1758,963.2 L1753.8,967 L1758,970.6"/>
<path fill="none" stroke="#000" stroke-width="1.9" stroke-linecap="round" stroke-linejoin="round" d="M1838.9,963.3 L1843.5,967.1 L1838.9,970.8"/>
<path fill="none" stroke="#000" stroke-width="1.9" stroke-linecap="round" stroke-linejoin="round" d="M280.2,1029.6 L287.4,1036 L280.2,1042.4"/>
<path fill="#5ce52d" d="M18.5,13.4 L23.6,9.9 L33.9,15.7 V27.7 L28.6,30.4 V19.6 Z"/>
<path fill="#5ce52d" d="M14,18.8 L19.3,16 L25.9,20.2 V29 L21.2,31.8 V23.3 Z"/>
<path fill="#5ce52d" d="M13.8,27.4 L18.9,24.8 V30.8 Z"/>
<circle cx="120.4" cy="18.4" r="1.2" fill="none" stroke="#555" stroke-width="0.7"/></svg>
<!-- window frame -->
<div style="position:fixed;left:0;top:0;width:1920px;height:1069px;border:2px solid rgba(0,0,0,0.12);border-top-color:rgba(0,0,0,0.15);border-right-color:rgba(0,0,0,0.11);border-radius:7px;box-shadow:0 0 0 40px #000;pointer-events:none;z-index:10"></div>
</body></html>
